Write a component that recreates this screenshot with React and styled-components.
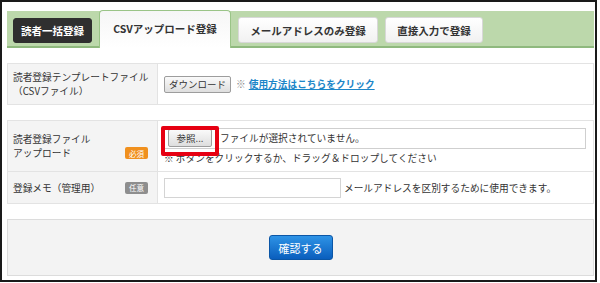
import React from 'react'
import styled, { createGlobalStyle } from 'styled-components'

const GlobalStyle = createGlobalStyle`
  html, body {
    margin: 0;
    background: #fff;
  }
  body {
    font-family: "Noto Sans CJK JP", "Liberation Sans", sans-serif;
    color: #333;
  }
  * {
    box-sizing: border-box;
  }
`

const Frame = styled.div`
  width: 597px;
  height: 282px;
  border: 2px solid #1a1a1a;
  padding: 9px 1px 0 5px;
`

const TabBar = styled.div`
  display: flex;
  align-items: flex-start;
  gap: 7px;
  height: 37px;
  padding: 6px 0 0 6px;
  background: #bcd8ab;
  border-bottom: 2px solid #8fb97e;
`

const Tab = styled.div`
  display: flex;
  align-items: center;
  justify-content: center;
  width: ${(p) => p.$w}px;
  height: 26px;
  font-size: 10.5px;
  font-weight: bold;
  border-radius: 3px;
  color: #333;
  background: linear-gradient(#ffffff, #f1f1f1);
  border: 1px solid #d8d8d8;
`

const DarkTab = styled(Tab)`
  height: 25px;
  margin-top: 1px;
  background: #2f2f2f;
  border-color: #2f2f2f;
  color: #fff;
`

const ActiveTab = styled(Tab)`
  position: relative;
  z-index: 1;
  margin-top: -7px;
  height: 38px;
  padding-bottom: 2px;
  background: linear-gradient(#f6f6f6, #ffffff);
  border: 1px solid #9ac487;
  border-bottom: none;
  border-radius: 4px 4px 0 0;
`

const Table = styled.div`
  margin-top: 15px;
  border: 1px solid #e3e3e3;
  display: flex;
  flex-direction: column;
`

const Row = styled.div`
  display: grid;
  grid-template-columns: 150px 1fr;
  height: ${(p) => p.$h}px;
  & + & {
    border-top: 1px solid #e3e3e3;
  }
`

const Label = styled.div`
  display: flex;
  align-items: center;
  padding: 0 9px 0 5px;
  background: #f4f4f4;
  border-right: 1px solid #e3e3e3;
`

const LabelInner = styled.div`
  flex: 1;
  display: flex;
  align-items: flex-end;
  justify-content: space-between;
`

const LabelText = styled.div`
  font-size: 9.7px;
  line-height: 14px;
  white-space: nowrap;
`

const Badge = styled.span`
  display: inline-flex;
  align-items: center;
  justify-content: center;
  width: 23px;
  height: 12px;
  margin-bottom: 1px;
  border-radius: 2px;
  font-size: 7.5px;
  color: #fff;
  background: ${(p) => (p.$optional ? '#8e8e8e' : '#f0901e')};
`

const Value = styled.div`
  display: flex;
  flex-direction: ${(p) => (p.$column ? 'column' : 'row')};
  justify-content: ${(p) => (p.$column ? 'center' : 'flex-start')};
  align-items: ${(p) => (p.$column ? 'flex-start' : 'center')};
  padding-left: 6px;
  font-size: 9.7px;
  white-space: nowrap;
`

const SmallButton = styled.button`
  height: 17px;
  padding: 0 4px;
  font-family: inherit;
  font-size: 9.5px;
  color: #333;
  background: linear-gradient(#fafafa, #dedede);
  border: 1px solid #9d9d9d;
  border-radius: 2px;
`

const Note = styled.span`
  margin-left: 5px;
  color: #888;
`

const HelpLink = styled.a`
  margin-left: 3px;
  color: #1d86c8;
  font-weight: bold;
  text-decoration: underline;
`

const FileField = styled.div`
  position: relative;
  display: flex;
  align-items: center;
  width: 423px;
  height: 21px;
  margin-left: -1px;
  border: 1px solid #cfcfcf;
`

const BrowseButton = styled(SmallButton)`
  width: 44px;
  height: 18px;
  margin-left: 4px;
`

const FileText = styled.span`
  margin-left: 8px;
`

const Highlight = styled.div`
  position: absolute;
  left: -3px;
  top: -3px;
  width: 58px;
  height: 30px;
  border: 4px solid #e60012;
  border-radius: 2px;
`

const Hint = styled.div`
  margin-top: 3px;
  line-height: 13px;
`

const MemoInput = styled.div`
  width: 177px;
  height: 20px;
  border: 1px solid #d4d4d4;
  background: #fff;
`

const MemoText = styled.span`
  margin-left: 3px;
`

const Actions = styled.div`
  display: flex;
  align-items: center;
  justify-content: center;
  height: 57px;
  margin-top: 15px;
  background: #f3f3f3;
  border: 1px solid #dcdcdc;
`

const Confirm = styled.button`
  width: 64px;
  height: 25px;
  font-family: inherit;
  font-size: 11px;
  color: #fff;
  background: linear-gradient(#2e93e6, #0a5ebd);
  border: 1px solid #0b56a6;
  border-radius: 3px;
`

const App = () => {
  return (
    <Frame>
      <GlobalStyle />
      <TabBar>
        <DarkTab $w={79}>読者一括登録</DarkTab>
        <ActiveTab $w={132}>CSVアップロード登録</ActiveTab>
        <Tab $w={140}>メールアドレスのみ登録</Tab>
        <Tab $w={98}>直接入力で登録</Tab>
      </TabBar>

      <Table>
        <Row $h={40}>
          <Label>
            <LabelText>
              読者登録テンプレートファイル
              <br />
              （CSVファイル）
            </LabelText>
          </Label>
          <Value>
            <SmallButton>ダウンロード</SmallButton>
            <Note>※</Note>
            <HelpLink>使用方法はこちらをクリック</HelpLink>
          </Value>
        </Row>
      </Table>

      <Table>
        <Row $h={50}>
          <Label>
            <LabelInner>
              <LabelText>
                読者登録ファイル
                <br />
                アップロード
              </LabelText>
              <Badge>必須</Badge>
            </LabelInner>
          </Label>
          <Value $column>
            <FileField>
              <BrowseButton>参照...</BrowseButton>
              <FileText>ファイルが選択されていません。</FileText>
              <Highlight />
            </FileField>
            <Hint>※ ボタンをクリックするか、ドラッグ＆ドロップしてください</Hint>
          </Value>
        </Row>
        <Row $h={32}>
          <Label>
            <LabelInner>
              <LabelText>登録メモ（管理用）</LabelText>
              <Badge $optional>任意</Badge>
            </LabelInner>
          </Label>
          <Value>
            <MemoInput />
            <MemoText>メールアドレスを区別するために使用できます。</MemoText>
          </Value>
        </Row>
      </Table>

      <Actions>
        <Confirm>確認する</Confirm>
      </Actions>
    </Frame>
  )
}

export default App
